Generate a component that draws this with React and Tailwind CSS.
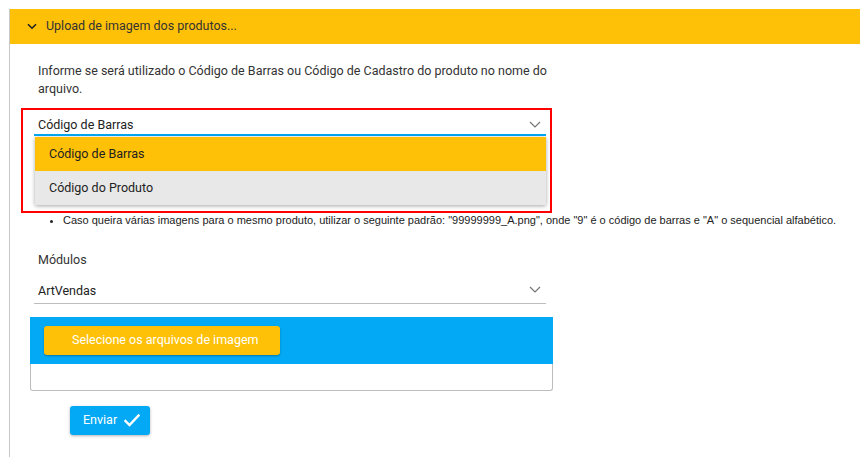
import React from 'react'

const Chevron = ({ className = '' }) => (
  <svg className={className} width="12" height="7" viewBox="0 0 12 7" fill="none">
    <polyline points="1,1 6,6 11,1" stroke="#757575" strokeWidth="1.2" />
  </svg>
)

const CheckIcon = () => (
  <svg width="16" height="13" viewBox="0 0 16 13" fill="none">
    <polyline points="1.5,7 5.5,11 14.5,1.5" stroke="#ffffff" strokeWidth="2.4" strokeLinecap="square" />
  </svg>
)

export default function App() {
  return (
    <div className="h-[457px] w-[860px] overflow-hidden bg-white pl-[9px] pt-[9px] font-['Roboto',sans-serif] text-[12.5px] text-[#222]">
      <div className="h-[448px] border-l border-[#c8c8c8]">
        <div className="flex h-[35px] items-center bg-[#ffc107] pl-[17px]">
          <svg width="10" height="7" viewBox="0 0 10 7" fill="none">
            <polyline points="1,1.2 5,5.2 9,1.2" stroke="#222" strokeWidth="1.6" />
          </svg>
          <span className="ml-[9px] text-[#333]">Upload de imagem dos produtos...</span>
        </div>

        <div className="ml-[24px] w-[512px]">
          <p className="mt-[18px] whitespace-nowrap px-[4px] leading-[18px] text-[#333]">
            Informe se será utilizado o Código de Barras ou Código de Cadastro do produto no nome do
            <br />
            arquivo.
          </p>

          <div className="relative mt-[10px] h-[28px]">
            <div className="flex h-[28px] items-end justify-between border-b-2 border-[#03a9f4] pl-[4px] pr-[5px]">
              <span className="leading-[18px]">Código de Barras</span>
              <Chevron className="mb-[6px]" />
            </div>
            <div className="absolute left-[1px] right-0 top-[29px] z-10 bg-[#e8e8e8] shadow-[0_1px_4px_rgba(0,0,0,0.35)]">
              <div className="flex h-[34px] items-center bg-[#ffc107] pl-[14px]">Código de Barras</div>
              <div className="flex h-[34px] items-center pl-[14px]">Código do Produto</div>
            </div>
            <div className="pointer-events-none absolute left-[-13px] top-0 z-20 h-[105px] w-[531px] border-2 border-[#ff0000]" />
          </div>

          <ul className="ml-[6px] mt-[74px] w-[820px] list-disc pl-[23px] font-['Liberation_Sans',sans-serif] text-[11px] leading-[20px] text-[#222]">
            <li>Caso queira várias imagens para o mesmo produto, utilizar o seguinte padrão: "99999999_A.png", onde "9" é o código de barras e "A" o sequencial alfabético.</li>
          </ul>

          <p className="mt-[21px] px-[4px] leading-[18px] text-[#333]">Módulos</p>

          <div className="mt-[9px] flex h-[26px] items-center justify-between border-b border-[#bdbdbd] pl-[4px] pr-[5px]">
            <span className="leading-[18px]">ArtVendas</span>
            <Chevron className="mb-[2px]" />
          </div>

          <div className="-ml-[4px] mt-[13px] w-[523px]">
            <div className="h-[47px] bg-[#03a9f4] pl-[14px] pt-[9px]">
              <button className="flex h-[29px] w-[236px] items-center rounded-[3px] bg-[#ffc107] pl-[28px] text-white shadow-[0_1px_2px_rgba(0,0,0,0.3)]">
                Selecione os arquivos de imagem
              </button>
            </div>
            <div className="h-[27px] rounded-b-[3px] border border-t-0 border-[#bdbdbd] bg-white" />
          </div>

          <button className="ml-[36px] mt-[15px] flex h-[29px] w-[80px] items-center rounded-[3px] bg-[#03a9f4] pl-[13px] text-white shadow-[0_1px_3px_rgba(0,0,0,0.3)]">
            Enviar
            <span className="ml-[7px]"><CheckIcon /></span>
          </button>
        </div>
      </div>
    </div>
  )
}
